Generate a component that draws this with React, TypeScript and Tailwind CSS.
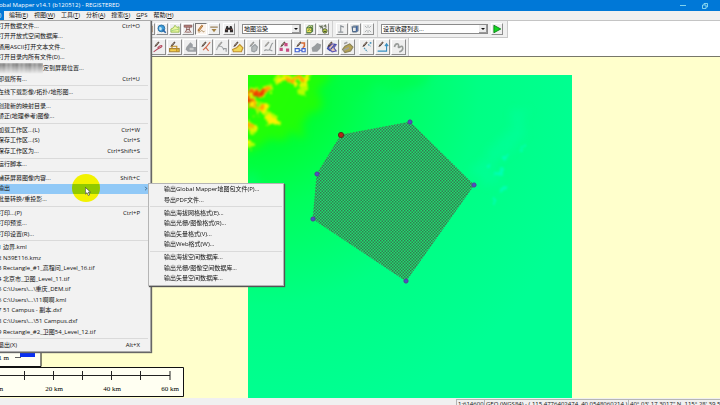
import React from 'react';

interface MenuEntry {
  label: string;
  shortcut?: string;
  smudged?: boolean;
  submenu?: MenuEntry[][];
}

interface Tool {
  name: string;
  icon: React.ReactNode;
  pressed?: boolean;
}

const menuBar = [
  { text: '文件', key: 'F', active: true },
  { text: '编辑', key: 'E' },
  { text: '视图', key: 'W' },
  { text: '工具', key: 'T' },
  { text: '分析', key: 'A' },
  { text: '搜索', key: 'S' },
];

const exportMenu: MenuEntry[][] = [
  [{ label: '输出Global Mapper地图包文件(P)...' }, { label: '导出PDF文件...' }],
  [
    { label: '输出海拔网格格式(E)...' },
    { label: '输出光栅/图像格式(R)...' },
    { label: '输出矢量格式(V)...' },
    { label: '输出Web格式(W)...' },
  ],
  [
    { label: '输出海拔空间数据库...' },
    { label: '输出光栅/图像空间数据库...' },
    { label: '输出矢量空间数据库...' },
  ],
];

const fileMenu: MenuEntry[][] = [
  [
    { label: '打开数据文件...', shortcut: 'Ctrl+O' },
    { label: '打开开放式空间数据库...' },
    { label: '通用ASCII打开文本文件...' },
    { label: '打开目录内所有文件(D)...' },
    { label: '定到屏幕位置...', smudged: true },
    { label: '卸载所有...', shortcut: 'Ctrl+U' },
  ],
  [{ label: '在线下载影像/拓扑/地形图...' }],
  [{ label: '创建新的映射目录...' }, { label: '矫正(地理参考)图像...' }],
  [
    { label: '加载工作区...(L)', shortcut: 'Ctrl+W' },
    { label: '保存工作区...(S)', shortcut: 'Ctrl+S' },
    { label: '保存工作区为...', shortcut: 'Ctrl+Shift+S' },
  ],
  [{ label: '运行脚本...' }],
  [
    { label: '捕获屏幕图像内容...', shortcut: 'Shift+C' },
    { label: '输出', submenu: exportMenu },
    { label: '批量转换/重投影...' },
  ],
  [
    { label: '打印...(P)', shortcut: 'Ctrl+P' },
    { label: '打印预览...' },
    { label: '打印设置(R)...' },
  ],
  [
    { label: '1 边界.kml' },
    { label: '2 N39E116.kmz' },
    { label: '3 Rectangle_#1_高程问_Level_16.tif' },
    { label: '4 北京市_卫图_Level_11.tif' },
    { label: '5 C:\\Users\\...\\重庆_DEM.tif' },
    { label: '6 C:\\Users\\...\\11啊啊.kml' },
    { label: '7 51 Campus - 副本.dxf' },
    { label: '8 C:\\Users\\...\\51 Campus.dxf' },
    { label: '9 Rectangle_#2_卫图54_Level_12.tif' },
  ],
  [{ label: '退出(X)', shortcut: 'Alt+X' }],
];

const Icon: React.FC<{ children: React.ReactNode }> = ({ children }) => (
  <svg viewBox="0 0 16 16" className="h-full w-full" fill="none" strokeWidth="1.4" aria-hidden="true">
    {children}
  </svg>
);

// the pencil that most digitizer tools share
const Pencil: React.FC<{ color?: string }> = ({ color = '#4b3a30' }) => (
  <>
    <path d="M3 8 L4 5.5 L8 1.2 L9.4 2.4 L5.4 7 Z" fill={color} />
    <path d="M4.6 5.8 L8 2.4" stroke="#c9b9a4" strokeWidth="0.7" />
  </>
);

const mainTools: Tool[] = [
  { name: '打开', icon: <Icon><path d="M2 3h11v10H2z" fill="#f5e7c0" stroke="#9a6a3c" /><path d="M9 2v12" stroke="#a35c2c" strokeWidth="2" /></Icon> },
  { name: '在线数据', icon: <Icon><circle cx="7" cy="7" r="5.4" fill="#3e9bd8" stroke="#256b9e" /><path d="M4 4.5l3 1 1 3-3 2-1.6-2z" fill="#c8ecf5" /><path d="M9 9l5 5" stroke="#2b66a8" strokeWidth="2.4" /></Icon> },
  { name: '海拔图例', icon: <Icon><path d="M1.5 13V8l4-2 2.5-4 3 3.5 3.5-1V13z" fill="#eef7a0" stroke="#8fb84f" /><path d="M2 11c4-2 7-1 12-3" stroke="#94cf78" /></Icon> },
  { name: '控制塔', icon: <Icon><path d="M2 2h12v3H2z" fill="#c68b84" stroke="#845552" /><path d="M6 5v4L3 14M10 5v4l3 5M5 9h6M5 13h6" stroke="#85514e" /></Icon> },
  { name: '数字化', pressed: true, icon: <Icon><path d="M3 10L9 2l2 1-6 8z" fill="#e2b06c" stroke="#a76c33" /><path d="M3 12c4 3 4-3 7-1s2 2 4 0" stroke="#a07c45" /></Icon> },
  { name: '展开', icon: <Icon><path d="M2 5h12" stroke="#9c835a" strokeWidth="2" /><path d="M4 8h8l-4 5z" fill="#a58242" /></Icon> },
];

const viewTools: Tool[] = [
  { name: '渲染选项', icon: <Icon><path d="M2 6l4-4h7v10l-4 3H2z" fill="#537b41" /><path d="M3 7h7v6H3z" fill="#efe15a" /><path d="M5 5l4-2 3 2" stroke="#dfe8a0" /><path d="M4 11l3-2 2 2" stroke="#3d7b36" /></Icon> },
  { name: '渲染工具', icon: <Icon><path d="M2 3l5 2 1 5M7 2l-3 5M9 4l3-2 1 4" stroke="#6c7560" strokeWidth="1.8" /><circle cx="11" cy="11" r="3.6" fill="#b6c548" stroke="#4b5935" /><path d="M9 12h4" stroke="#40522d" /></Icon> },
];

const graphTools: Tool[] = [
  { name: '剖面', icon: <Icon><path d="M2 13h8M6 13V3l5 2" stroke="#8f959b" strokeWidth="1.8" /></Icon> },
  { name: '三维视图', icon: <Icon><path d="M2 4l4-2h8v9l-4 3H4z" fill="#8d9aa7" /><path d="M4 5h6v7H4z" fill="#e8e8e8" stroke="#3f5d80" /><path d="M11 3v9" stroke="#345ea2" strokeWidth="2" /></Icon> },
  { name: '视域', icon: <Icon><path d="M3 3l3 3M13 3l-3 3M3 13l3-3M13 13l-3-3M8 2v4M8 10v4" stroke="#a2a7a8" /></Icon> },
];

const drawTools: Tool[] = [
  { name: '绘制线', icon: <Icon><Pencil /><path d="M7 9c6-5 7-2 3 0s-5 3-8 5" stroke="#b5475c" /></Icon> },
  { name: '编辑要素', icon: <Icon><Pencil /><path d="M2 10h12v4H2z" fill="#f3cf4c" stroke="#a88438" /><path d="M5 10V7h6v7" stroke="#bd8b24" /></Icon> },
  { name: '绘制区域', icon: <Icon><path d="M3 8l5-6 3 3v3h4v6H5l-3-3z" fill="#9b9fa3" /><path d="M7 9h5v3H7z" fill="#c9caca" /></Icon> },
  { name: '移动顶点', icon: <Icon><Pencil /><path d="M5 12l4-4 5-6M9 9l3 4" stroke="#d26a4e" /></Icon> },
  { name: '弧线', icon: <Icon><Pencil color="#93979a" /><path d="M2 12c1-6 7-7 9 0" stroke="#a6a9ab" /><path d="M10 10h4v4" stroke="#999d9f" /></Icon> },
  { name: '区域', icon: <Icon><path d="M2 11l5-2 4-4 4 4-2 5H3z" fill="#f1d95a" stroke="#c2902e" /><Pencil /></Icon> },
  { name: '圆', icon: <Icon><Pencil color="#888d90" /><path d="M6 13V8l4-3 3 3-1 4-3 2z" fill="#b6babb" stroke="#989ea1" /></Icon> },
  { name: '曲线', icon: <Icon><Pencil color="#909496" /><path d="M3 13c2-4 5 2 7-3s2-7 4-7M9 11l4 2" stroke="#989c9e" /></Icon> },
  { name: '点阵', icon: <Icon><Pencil /><path d="M8 3h4v4H8zM2 9h4v4H2zM10 10h4v4h-4z" fill="#c74c83" /></Icon> },
  { name: '旋转', icon: <Icon><Pencil /><path d="M9 3h4v4l-2 2" stroke="#d86d36" strokeWidth="2" /><path d="M1.5 10h5v4h-5zM10 10h4v4h-4zM7 12h3" fill="#fff" stroke="#3e5fd0" /></Icon> },
  { name: '合并', icon: <Icon><path d="M2 9l4-3 3-3 5 2-1 5-4 4H3z" fill="#989c9e" /></Icon> },
  { name: '裁剪', icon: <Icon><path d="M4 9l5-5 5 1-3 4 3 4-5 1z" fill="#e8c4b4" stroke="#5b52b1" /><path d="M6 5l-3 5 4 3M13 4l-6 7" stroke="#374ca9" /><Pencil /></Icon> },
  { name: '缓冲区', icon: <Icon><path d="M2 11l3-4 6-3 4 4-3 5-7 2z" fill="#b5a354" stroke="#8c8359" /><path d="M4 4l4-2M3 12l7-3" stroke="#a0a0a0" strokeWidth="2" /></Icon> },
];

const pathTools: Tool[] = [
  { name: '折线', icon: <Icon><Pencil /><path d="M5 9l4 5M10 5l3 2" stroke="#4c96b6" strokeDasharray="2 1" /><path d="M12 2h2v2h-2z" fill="#3c91bc" /></Icon> },
  { name: '直角', icon: <Icon><Pencil /><path d="M2 13h11V5M11 7l2-3 2 3" stroke="#378fc0" /></Icon> },
  { name: '撤销', icon: <Icon><path d="M3 8c1-5 6-5 5-1s4-2 5 1-1 5-4 6" stroke="#989c99" strokeWidth="2" /></Icon> },
];

const ToolButton: React.FC<{ tool: Tool; className: string }> = ({ tool, className }) => (
  <button
    type="button"
    aria-label={tool.name}
    className={`${className} border ${
      tool.pressed
        ? 'border-t-[#777777] border-l-[#777777] border-r-white border-b-white bg-[#fbf3ec]'
        : 'border-t-white border-l-white border-r-[#8e8e8e] border-b-[#8e8e8e] bg-[#efefef]'
    }`}
  >
    {tool.icon}
  </button>
);

const SmallTools: React.FC<{ tools: Tool[] }> = ({ tools }) => (
  <div className="flex gap-px">
    {tools.map((tool) => (
      <ToolButton key={tool.name} tool={tool} className="h-3 w-3" />
    ))}
  </div>
);

const Divider = () => <div className="h-4 w-px bg-[#cfcfcf]" />;

const Dropdown: React.FC<{ label: string; value: string; className: string }> = ({ label, value, className }) => (
  <div className={`relative ${className}`}>
    <select
      aria-label={label}
      className="block h-[10px] w-full appearance-none border border-[#8b8b8b] bg-white pl-px text-[6px] leading-[8px] text-black"
    >
      <option>{value}</option>
    </select>
    <span className="pointer-events-none absolute top-px right-px flex h-2 w-2 items-center justify-center border-r border-b border-[#999999] bg-[#ececec]">
      <svg viewBox="0 0 4 2" className="h-[2px] w-1" aria-hidden="true">
        <path d="M0 0h4L2 2z" fill="#111" />
      </svg>
    </span>
  </div>
);

const MenuGroups: React.FC<{ groups: MenuEntry[][]; rowClass: string }> = ({ groups, rowClass }) => (
  <>
    {groups.map((group, index) => (
      <React.Fragment key={index}>
        {index > 0 && <li role="separator" className="flex h-[3px] items-center"><span className="h-px w-full bg-[#dadada]" /></li>}
        {group.map((entry) => (
          <MenuRow key={entry.label} entry={entry} rowClass={rowClass} />
        ))}
      </React.Fragment>
    ))}
  </>
);

const MenuRow: React.FC<{ entry: MenuEntry; rowClass: string }> = ({ entry, rowClass }) => (
  <li className="relative flex min-h-0 flex-1">
    <button
      type="button"
      className={`flex w-full items-center justify-between text-left whitespace-pre ${rowClass} ${entry.submenu ? 'bg-[#91c9f7]' : ''}`}
    >
      <span className="flex items-center">
        {entry.smudged && (
          <span className="h-[11px] w-[45px] bg-[repeating-linear-gradient(90deg,#d0d0d0_0px,#5c5c5c_2px,#b4b4b4_4px,#484848_6px,#c8c8c8_8px,#6a6a6a_11px,#d8d8d8_13px)] mask-b-from-10% blur-[1px]" />
        )}
        {entry.label}
      </span>
      {entry.shortcut && <span>{entry.shortcut}</span>}
      {entry.submenu && (
        <svg viewBox="0 0 4 6" className="-mr-2 h-[5px] w-1" fill="none" stroke="#33506b" aria-hidden="true">
          <path d="M1 1l2 2-2 2" />
        </svg>
      )}
    </button>
    {entry.submenu && (
      <ul className="absolute -top-px left-full z-10 flex h-[103px] w-[136px] flex-col border border-[#b5b5b5] bg-[#f2f2f2] p-px shadow-[1px_1px_1px_#555]">
        <MenuGroups groups={entry.submenu} rowClass="pl-[14px]" />
      </ul>
    )}
  </li>
);

const FileMenu = () => (
  <ul className="absolute top-5 -left-6 z-20 flex h-[332px] w-[175px] flex-col border border-[#a8a8a8] bg-[#f2f2f2] pr-[2px] shadow-[1px_1px_1px_#666]">
    <MenuGroups groups={fileMenu} rowClass="pr-2 pl-[21px]" />
  </ul>
);

const vertices = [
  [93, 60],
  [162, 47],
  [226, 110],
  [158, 206],
  [65, 144],
  [69, 99],
];

const Terrain = () => (
  <svg viewBox="0 0 324 323" preserveAspectRatio="xMinYMin slice" className="ml-[248px] w-[45%] flex-1" role="img" aria-label="DEM">
    <defs>
      <radialGradient id="relief" gradientUnits="userSpaceOnUse" cx="10" cy="10" r="340">
        <stop offset="0" stopColor="#20ff08" />
        <stop offset="0.18" stopColor="#00ff34" />
        <stop offset="0.36" stopColor="#00ff5c" />
        <stop offset="0.65" stopColor="#00ff84" />
        <stop offset="1" stopColor="#00ff94" />
      </radialGradient>
      <filter id="rough" x="-20%" y="-20%" width="140%" height="140%" colorInterpolationFilters="sRGB">
        <feTurbulence type="fractalNoise" baseFrequency="0.12" numOctaves="4" seed="4" />
        <feDisplacementMap in="SourceGraphic" scale="14" xChannelSelector="R" yChannelSelector="G" />
        <feGaussianBlur stdDeviation="0.9" />
      </filter>
      <filter id="soft" x="-30%" y="-30%" width="160%" height="160%" colorInterpolationFilters="sRGB">
        <feTurbulence type="fractalNoise" baseFrequency="0.05" numOctaves="3" seed="9" />
        <feDisplacementMap in="SourceGraphic" scale="30" xChannelSelector="R" yChannelSelector="G" />
        <feGaussianBlur stdDeviation="4" />
      </filter>
      <pattern id="hatch" width="3" height="3" patternUnits="userSpaceOnUse">
        <rect width="3" height="3" fill="#20dc70" />
        <rect width="1.5" height="1.5" fill="#347a50" />
        <rect x="1.5" y="1.5" width="1.5" height="1.5" fill="#347a50" />
      </pattern>
    </defs>
    <rect width="324" height="323" fill="url(#relief)" />
    <g filter="url(#soft)">
      <path d="M-6 -6h90L62 34 48 60 20 66 -6 78z" fill="#28ff00" opacity="0.8" />
      <path d="M90 -4h110l-40 14-60 8z" fill="#00ff40" opacity="0.5" />
      <path d="M0 100l20 20-6 50-14 20z" fill="#00ff78" opacity="0.4" />
    </g>
    <g filter="url(#rough)" strokeLinecap="round" strokeLinejoin="round" fill="none">
      <path d="M-2 20l24-7M2 25l16 10 10 10M-2 48l8 6M32 3l16 2 12-4-4 12-4 6M-2 66l4 3M20 44l10 2" stroke="#b4ff00" strokeWidth="7" />
      <path d="M-2 20l22-6M0 25l18 10M34 5l14 1 12-4-4 8M-2 48l8 6M18 44l12 2M2 30l6 8M-2 66l3 2" stroke="#fff000" strokeWidth="4.4" />
      <path d="M-2 20l22-6M0 26l14 6M40 6l14-3M0 31l4 4M-2 49l4 3" stroke="#ffa000" strokeWidth="3" />
      <path d="M-4 21l12-2M-2 25l6 1M8 17l8-2" stroke="#f03c00" strokeWidth="3" />
    </g>
    <g filter="url(#soft)" fill="#00ffb0" opacity="0.3">
      <path d="M222 92l26-18 20-36 12-8-6 36-24 24-8 24-14-4z" />
    </g>
    <g filter="url(#rough)" fill="#00ffc4" opacity="0.7">
      <circle cx="258" cy="82" r="2" />
      <circle cx="250" cy="98" r="3" />
      <circle cx="240" cy="91" r="2" />
      <circle cx="255" cy="114" r="3" />
      <circle cx="276" cy="73" r="2" />
      <circle cx="244" cy="126" r="2" />
    </g>
    <polygon points={vertices.map((v) => v.join(',')).join(' ')} fill="url(#hatch)" stroke="#4b7b58" strokeWidth="0.8" strokeDasharray="1.5 1.5" />
    {vertices.map(([x, y], i) => (
      <circle key={i} cx={x} cy={y} r={i === 0 ? 2.6 : 2.1} fill={i === 0 ? '#b02818' : '#4b50c8'} stroke={i === 0 ? '#54301c' : '#5a3c96'} strokeWidth="1" />
    ))}
  </svg>
);

const ScaleBar = () => (
  <div className="absolute bottom-px left-0">
    <svg viewBox="0 0 42 16" className="block h-4 w-[42px]" fontFamily="Liberation Serif, serif" fontSize="7">
      <path d="M-1 -1H41V15.5H-1z" fill="#fffff2" stroke="#111" />
      <text x="9" y="9" textAnchor="end">1 m</text>
      <path d="M15 6.5h6" stroke="#333" strokeWidth="0.8" />
      <rect x="20" width="15" height="6" fill="#0a30f0" />
    </svg>
    <svg viewBox="0 0 184 30" className="block h-[30px] w-[184px]" fontFamily="Liberation Serif, serif" fontSize="7" textAnchor="middle">
      <path d="M-1 0.5H183.5V29.5H-1z" fill="#fffff2" stroke="#111" />
      <path d="M0 8.5h170M24.5 4v9M53.5 4v9M82.5 4v9M111.5 4v9M140.5 4v9M170 4v9" stroke="#222" fill="none" />
      <text x="-4" y="24">0 km</text>
      <text x="54" y="24">20 km</text>
      <text x="112" y="24">40 km</text>
      <text x="170" y="24">60 km</text>
    </svg>
  </div>
);

const Pointer = () => (
  <>
    <div className="pointer-events-none absolute top-[174px] left-[72px] z-30 h-7 w-7 rounded-full bg-[#ffff00] mix-blend-multiply" />
    <svg viewBox="0 0 8 12" className="pointer-events-none absolute top-[187px] left-[85px] z-30 h-[9px] w-[6px]" aria-hidden="true">
      <path d="M0.5 0.5v9l2.2-2 1.8 4 1.7-.8-1.8-3.8h3z" fill="#fff" stroke="#333" strokeWidth="0.8" />
    </svg>
  </>
);

const App: React.FC = () => {
  return (
    <div className="relative flex h-screen flex-col overflow-hidden bg-white font-['Open_Sans','Noto_Sans_CJK_SC',sans-serif] text-[6px] leading-[9px] text-[#111111]">
      <header className="flex h-[11px] shrink-0 items-center justify-between bg-[#0078d7] text-white">
        <h1 className="-ml-[7px] whitespace-nowrap">Global Mapper v14.1 (b120512) - REGISTERED</h1>
        <div className="mr-3 flex items-center gap-4">
          <button type="button" aria-label="最小化" className="flex h-2 w-[6px] items-center">
            <span className="h-px w-full bg-[#7fd3ee]" />
          </button>
          <button type="button" aria-label="还原">
            <svg viewBox="0 0 6 6" className="h-[6px] w-[6px]" fill="none" stroke="#8fdcf0" strokeWidth="0.9" aria-hidden="true">
              <path d="M0.5 2h3.5v3.5H0.5zM2 2V0.5h3.5V4H4" />
            </svg>
          </button>
        </div>
      </header>

      <nav className="flex h-[9px] shrink-0 bg-[#f0f0f0] whitespace-nowrap">
        {menuBar.map((item) => (
          <button key={item.key} type="button" className={item.active ? '-ml-5 mr-[5px] w-6 bg-[#0078d7] text-white' : 'mr-[6px]'}>
            {item.text}(<u>{item.key}</u>)
          </button>
        ))}
        <button type="button" className="mr-[6px]"><u>G</u>PS</button>
        <button type="button">帮助(<u>H</u>)</button>
      </nav>

      <div className="shrink-0 border-t border-b border-t-[#c4c4c4] border-b-[#77776a]">
        <div className="flex w-fit items-center gap-[3px] border-r border-b border-[#c9c9c9] bg-[#f0f0f0] pr-1 pl-[143px]">
          <SmallTools tools={mainTools} />
          <SmallTools
            tools={[{ name: '查找', icon: <Icon><path d="M4 3h2.5l.5 3h2l.5-3H12l2.5 7v3H9.5v-4h-3v4h-5v-3z" fill="#302c2c" /><path d="M3 9h2M11 9h2" stroke="#a65d50" /></Icon> }]}
          />
          <Divider />
          <Dropdown label="渲染方式" value="地图渲染" className="w-[59px]" />
          <SmallTools tools={viewTools} />
          <Divider />
          <SmallTools tools={graphTools} />
          <Divider />
          <Dropdown label="收藏列表" value="设置收藏列表..." className="w-[107px]" />
          <SmallTools tools={[{ name: '运行', icon: <Icon><path d="M3 2l11 6-11 6z" fill="#12d820" stroke="#0c7c18" /></Icon> }]} />
        </div>
        <div className="flex w-fit items-center gap-1 border-r border-[#c9c9c9] bg-[#f0f0f0] py-px pr-[2px] pl-[151px]">
          <div className="flex w-[204px] gap-px">
            {drawTools.map((tool) => (
              <ToolButton key={tool.name} tool={tool} className="h-4 min-w-0 flex-1" />
            ))}
          </div>
          <div className="flex w-[47px] gap-px">
            {pathTools.map((tool) => (
              <ToolButton key={tool.name} tool={tool} className="h-4 min-w-0 flex-1" />
            ))}
          </div>
        </div>
      </div>

      <main className="relative flex min-h-0 flex-1 flex-col bg-[#ffffcc] pt-[18px]">
        <Terrain />
        <ScaleBar />
      </main>

      <footer className="flex h-[7px] shrink-0 justify-end overflow-hidden bg-[#f0f0f0] pt-px leading-[8px] whitespace-nowrap">
        <span className="w-7 shrink-0 border-t border-l border-[#b5b5b5] pl-px">1:614600</span>
        <span className="w-36 shrink-0 border-t border-l border-[#b5b5b5] pl-px">GEO (WGS84) - ( 115.4776402474, 40.0548060214 )</span>
        <span className="w-[92px] shrink-0 border-t border-l border-[#b5b5b5] pl-px">40° 03' 17.3017" N, 115° 28' 39.5</span>
      </footer>

      <FileMenu />
      <Pointer />
    </div>
  );
};

export default App;
